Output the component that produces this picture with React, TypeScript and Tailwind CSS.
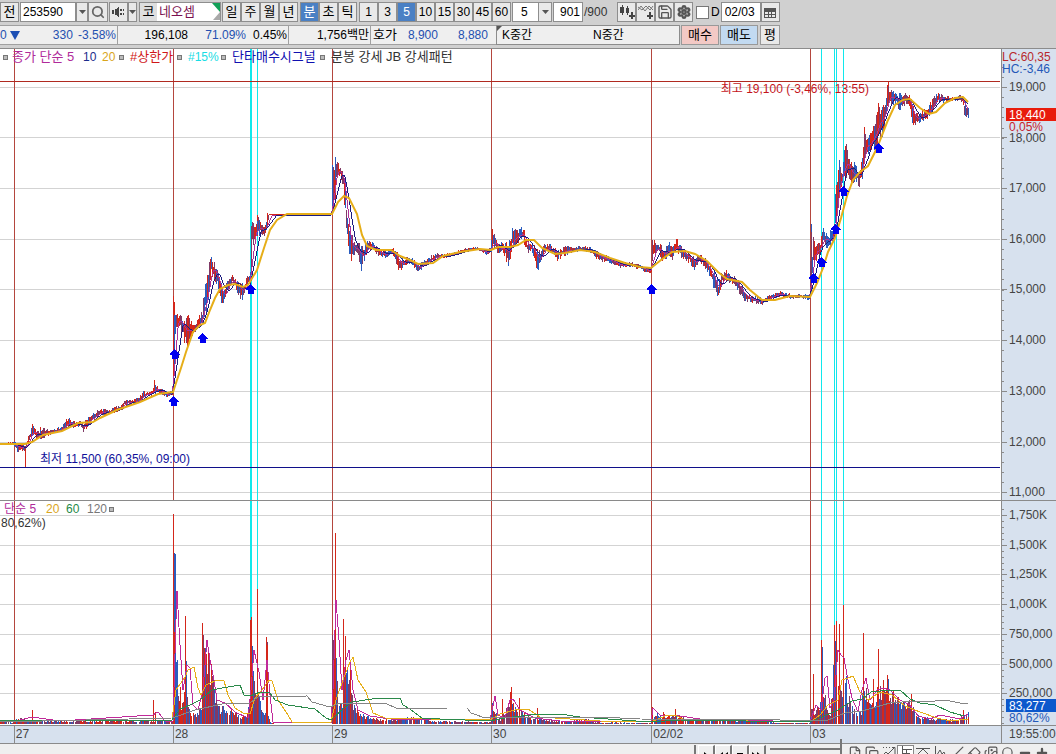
import type { ReactNode } from "react";
import { Search, Save, Settings, FilePlus, Copy, Slash, Eraser, Images, Minus, Plus } from "lucide-react";

type Pt = [number, number];
type Band = [number, number, number];

const RED = "#d4261a";
const BLUE = "#2a5cbf";
const MIX = "#803a66";
const GOLD = "#e6ae18";
const CYAN = "#10e8ec";

// x, top, bottom of the price band
const PRICE: Band[] = [
    [0, 443, 445], [13, 442, 445], [17, 443, 452], [25, 444, 450], [30, 430, 440], [32, 424, 436], [37, 432, 440],
    [43, 428, 438], [50, 430, 435], [62, 426, 431], [68, 417, 426], [75, 422, 428], [80, 421, 426], [83, 424, 433],
    [87, 418, 427], [93, 413, 421], [100, 408, 416], [110, 409, 414], [120, 405, 411], [125, 398, 406], [130, 400, 405],
    [138, 398, 403], [143, 392, 398], [152, 390, 395], [154, 381, 394], [158, 387, 393], [167, 392, 398], [172, 391, 396],
    [173, 300, 393], [175, 303, 342], [178, 313, 326], [182, 318, 332], [184, 320, 344], [186, 313, 348], [190, 322, 338], [195, 324, 333],
    [199, 315, 328], [202, 312, 326], [203, 290, 322], [207, 276, 310], [209, 262, 290], [211, 255, 272], [213, 262, 280],
    [217, 268, 288], [220, 280, 298], [223, 290, 308], [225, 284, 298], [228, 279, 290], [232, 273, 285], [235, 278, 288],
    [238, 281, 296], [242, 283, 299], [245, 281, 292], [248, 273, 284], [250, 272, 284], [251, 225, 276], [252, 222, 245],
    [255, 228, 240], [257, 216, 238], [260, 223, 234], [265, 226, 235], [267, 214, 226], [269, 214, 215], [331, 214, 215],
    [332, 168, 213], [333, 166, 212], [335, 158, 180], [337, 161, 180], [340, 166, 178], [343, 172, 190], [345, 182, 222],
    [346, 205, 232], [348, 220, 247], [351, 230, 266], [353, 240, 256], [357, 241, 256], [361, 248, 270], [363, 246, 262],
    [367, 242, 253], [370, 240, 250], [373, 243, 250], [378, 247, 257], [385, 251, 258], [392, 247, 254], [395, 250, 262],
    [399, 256, 271], [403, 258, 267], [410, 257, 264], [418, 263, 273], [423, 261, 267], [430, 256, 263], [437, 253, 259],
    [445, 254, 258], [453, 252, 256], [467, 248, 251], [477, 247, 250], [486, 250, 255], [490, 248, 252], [492, 230, 250],
    [495, 238, 248], [498, 243, 255], [503, 242, 253], [508, 244, 265], [510, 234, 258], [512, 230, 248], [517, 229, 244],
    [520, 227, 239], [523, 228, 242], [527, 241, 253], [532, 243, 252], [537, 250, 271], [540, 251, 264], [543, 245, 257],
    [547, 243, 252], [553, 247, 254], [557, 250, 260], [565, 246, 255], [575, 247, 252], [585, 246, 251], [592, 248, 255],
    [600, 253, 261], [610, 257, 263], [620, 262, 268], [630, 262, 267], [640, 265, 269], [647, 268, 273], [651, 266, 272],
    [652, 238, 262], [655, 243, 258], [658, 241, 253], [663, 248, 264], [668, 241, 256], [672, 248, 260], [676, 237, 250],
    [678, 242, 254], [685, 251, 261], [690, 253, 263], [694, 257, 271], [698, 255, 262], [703, 256, 265], [708, 262, 273],
    [713, 270, 287], [718, 281, 300], [722, 272, 284], [727, 270, 281], [732, 275, 284], [737, 279, 290], [743, 289, 300],
    [752, 296, 303], [758, 297, 304], [763, 299, 305], [768, 295, 301], [773, 293, 299], [780, 291, 296], [785, 293, 298],
    [792, 294, 299], [800, 294, 298], [809, 295, 300], [811, 224, 290], [812, 253, 280], [813, 236, 268], [815, 244, 262],
    [817, 240, 258], [820, 243, 254], [823, 219, 248], [825, 233, 247], [828, 234, 251], [832, 228, 244], [834, 218, 240],
    [835, 180, 232], [837, 174, 215], [839, 163, 187], [842, 170, 188], [844, 144, 178], [847, 146, 176], [848, 156, 180],
    [852, 166, 186], [855, 163, 180], [859, 172, 187], [862, 152, 177], [864, 127, 160], [867, 137, 156], [872, 128, 150],
    [875, 120, 148], [878, 102, 140], [882, 106, 136], [885, 93, 126], [888, 84, 106], [892, 92, 104], [896, 92, 103],
    [900, 94, 114], [905, 91, 103], [909, 96, 105], [912, 102, 126], [914, 113, 125], [920, 112, 122], [927, 108, 118],
    [932, 99, 111], [937, 93, 102], [943, 96, 102], [952, 97, 101], [960, 95, 100], [963, 97, 106], [964, 101, 117], [968, 106, 119],
];

const PRICE_MA20: Pt[] = [
    [0, 444], [25, 444], [32, 442], [43, 435], [62, 431], [78, 423], [93, 422], [100, 418], [117, 410], [140, 402],
    [158, 394], [173, 392], [177, 380], [181, 368], [186, 352], [193, 332], [200, 325], [205, 323], [210, 310], [215, 298],
    [220, 289], [228, 285], [235, 284], [243, 287], [248, 285], [257, 270], [264, 248], [270, 230], [277, 220], [287, 214],
    [332, 214], [338, 202], [344, 196], [349, 198], [357, 214], [362, 235], [367, 246], [376, 250], [391, 250], [400, 256],
    [410, 260], [418, 264], [433, 263], [443, 256], [460, 252], [480, 249], [491, 250], [498, 247], [510, 247], [518, 245],
    [526, 240], [534, 240], [542, 248], [555, 254], [565, 253], [580, 250], [595, 252], [610, 258], [625, 263], [640, 267],
    [651, 268], [661, 260], [672, 252], [685, 251], [695, 254], [707, 261], [718, 272], [727, 279], [742, 282], [750, 290],
    [762, 300], [775, 300], [790, 296], [810, 297], [817, 283], [823, 268], [828, 252], [835, 238], [841, 218], [847, 196],
    [853, 180], [860, 172], [868, 166], [877, 148], [888, 120], [895, 105], [903, 100], [910, 99], [920, 108], [929, 114],
    [936, 112], [945, 103], [955, 98], [963, 97], [968, 102],
];

// x, bar height
const VOLUME: Pt[] = [
    [0, 3], [12, 2], [16, 6], [30, 4], [60, 3], [150, 4], [172, 4], [173, 100], [177, 60], [180, 20], [182, 25], [186, 42],
    [188, 22], [192, 10], [197, 12], [201, 20], [203, 80], [206, 75], [209, 62], [212, 56], [215, 35], [220, 18], [230, 14],
    [240, 8], [246, 7], [249, 20], [251, 100], [254, 50], [258, 28], [262, 16], [265, 15], [266, 86], [267, 80], [268, 10],
    [270, 2], [275, 0], [331, 0], [332, 90], [336, 65], [339, 32], [342, 24], [345, 60], [350, 54], [353, 22], [358, 14],
    [365, 9], [380, 5], [395, 5], [400, 6], [425, 7], [430, 3], [450, 3], [490, 2], [491, 20], [494, 14], [500, 5],
    [508, 25], [511, 30], [514, 18], [518, 14], [525, 10], [532, 7], [538, 7], [545, 4], [560, 3], [588, 5], [592, 2],
    [650, 1], [651, 15], [654, 10], [665, 9], [675, 10], [685, 6], [700, 4], [720, 5], [760, 3], [780, 1], [809, 1],
    [811, 16], [815, 14], [820, 20], [822, 60], [824, 35], [826, 20], [830, 12], [834, 70], [836, 80], [838, 50], [842, 42],
    [845, 55], [848, 28], [852, 20], [856, 10], [861, 14], [863, 45], [867, 32], [871, 24], [877, 34], [883, 38], [889, 36],
    [893, 28], [900, 24], [905, 22], [910, 24], [915, 14], [920, 7], [930, 6], [945, 5], [955, 4], [960, 7], [968, 12],
];

const VOLUME_SPIKES: [number, number, string][] = [
    [32, 710, RED], [153, 700, RED], [155, 712, RED], [173, 514, RED], [174, 553, BLUE], [175, 554, BLUE], [176, 662, BLUE],
    [185, 616, RED], [186, 661, BLUE], [180, 687, RED], [202, 623, RED], [203, 635, MIX], [205, 648, BLUE], [208, 648, RED], [206, 658, RED],
    [211, 664, RED], [250, 620, RED], [251, 617, RED], [252, 646, BLUE], [253, 672, BLUE], [257, 589, RED], [266, 637, RED],
    [267, 642, MIX], [332, 635, MIX], [333, 640, MIX], [334, 631, RED], [335, 533, RED], [336, 658, BLUE], [343, 619, RED],
    [345, 636, RED], [347, 668, BLUE], [350, 660, RED], [492, 703, BLUE], [502, 699, RED], [510, 692, RED], [511, 687, RED],
    [519, 698, RED], [537, 708, RED], [652, 707, RED], [663, 712, RED], [675, 709, RED], [813, 674, RED], [821, 640, RED],
    [822, 647, BLUE], [834, 625, RED], [835, 641, BLUE], [836, 621, RED], [839, 624, RED], [843, 605, RED], [863, 633, RED],
    [873, 679, RED], [878, 649, RED], [883, 680, RED], [887, 675, RED], [888, 679, BLUE], [893, 690, RED], [911, 694, RED],
    [963, 710, RED], [968, 712, BLUE],
];

const VOLUME_LINES: { color: string; points: Pt[] }[] = [
    {
        color: "#c02a9a",
        points: [
            [0, 721], [20, 720], [32, 717], [60, 721], [153, 715], [158, 712], [165, 721], [173, 721], [176, 620], [177, 591],
            [180, 645], [183, 690], [187, 665], [190, 668], [193, 705], [198, 710], [203, 690], [207, 640], [210, 660],
            [214, 680], [217, 700], [225, 703], [235, 712], [248, 718], [251, 690], [254, 650], [259, 672], [263, 700],
            [267, 660], [270, 695], [273, 722], [331, 723], [333, 690], [336, 600], [339, 640], [342, 690], [346, 660],
            [349, 650], [353, 690], [358, 710], [370, 716], [390, 719], [490, 720], [495, 696], [498, 715], [505, 718],
            [510, 700], [513, 699], [520, 710], [535, 718], [560, 721], [651, 722], [653, 708], [660, 715], [680, 716],
            [700, 719], [810, 722], [816, 705], [821, 710], [825, 678], [827, 676], [830, 708], [834, 700], [838, 650],
            [841, 655], [844, 658], [847, 675], [852, 698], [858, 712], [862, 690], [866, 678], [870, 700], [877, 690],
            [883, 688], [890, 690], [900, 700], [910, 705], [918, 716], [930, 719], [940, 715], [960, 719], [968, 714],
        ],
    },
    {
        color: GOLD,
        points: [
            [0, 721], [172, 720], [176, 690], [185, 677], [188, 670], [194, 667], [198, 688], [201, 695], [206, 685],
            [217, 680], [224, 681], [228, 695], [235, 708], [243, 713], [250, 714], [255, 698], [262, 690], [269, 680],
            [272, 681], [278, 700], [288, 715], [292, 722], [331, 722], [336, 700], [343, 680], [350, 662], [353, 657],
            [358, 680], [366, 692], [373, 713], [385, 718], [430, 719], [490, 720], [500, 714], [515, 710], [528, 709],
            [540, 717], [600, 721], [651, 722], [665, 716], [675, 715], [685, 720], [810, 722], [820, 715], [828, 705],
            [838, 700], [842, 680], [848, 678], [853, 676], [860, 692], [868, 700], [880, 692], [892, 695], [905, 706],
            [920, 712], [937, 718], [950, 721], [968, 719],
        ],
    },
    {
        color: "#2b8a4a",
        points: [
            [0, 720], [172, 720], [180, 709], [190, 705], [200, 700], [212, 690], [222, 688], [240, 685], [244, 695],
            [250, 696], [260, 692], [270, 693], [275, 700], [288, 705], [315, 709], [326, 718], [331, 720], [345, 707],
            [352, 702], [372, 699], [400, 698], [403, 705], [410, 709], [422, 718], [440, 719], [490, 721], [505, 718],
            [538, 714], [560, 714], [580, 717], [650, 722], [680, 720], [810, 722], [838, 710], [852, 701], [862, 699],
            [871, 692], [890, 690], [900, 690], [910, 699], [920, 703], [935, 705], [950, 712], [964, 716],
        ],
    },
    {
        color: "#858585",
        points: [
            [0, 722], [172, 718], [195, 710], [222, 704], [250, 703], [258, 697], [307, 696], [312, 702], [330, 707],
            [340, 703], [385, 703], [398, 709], [448, 708], [467, 708], [471, 713], [485, 718], [510, 717], [600, 717],
            [640, 719], [780, 720], [828, 720], [845, 713], [862, 711], [890, 703], [915, 701], [935, 701], [945, 700],
            [960, 703], [968, 703],
        ],
    },
];

const DAY_LINES = [14, 173, 332, 491, 651, 810];
const SIGNAL_LINES = [250, 251, 257, 821, 834, 836, 843];
const ARROWS: Pt[] = [
    [174, 354], [173, 401], [202, 338], [250, 289], [651, 289], [813, 278], [821, 262], [835, 229], [843, 191], [878, 148],
];
const PRICE_GRID = [87, 137, 188, 239, 289, 340, 391, 442, 492];
const PRICE_LABELS = ["19,000", "18,000", "17,000", "16,000", "15,000", "14,000", "13,000", "12,000", "11,000"];
const VOLUME_GRID = [515, 545, 574, 604, 634, 664, 693];
const VOLUME_LABELS = ["1,750K", "1,500K", "1,250K", "1,000K", "750,000", "500,000", "250,000"];

// Fixed seed so the bars look the same on every render
function makeRandom(seed: number) {
    let s = seed;
    return () => {
        s = (s * 16807) % 2147483647;
        return s / 2147483647;
    };
}

function interpolate(rows: number[][], x: number, col: number) {
    for (let i = 1; i < rows.length; i++) {
        if (x <= rows[i][0]) {
            const a = rows[i - 1];
            const b = rows[i];
            return a[col] + ((b[col] - a[col]) * (x - a[0])) / (b[0] - a[0]);
        }
    }
    return rows[rows.length - 1][col];
}

function toPath(points: number[][]) {
    return "M" + points.map((p) => `${p[0]} ${p[1]}`).join("L");
}

function buildCandles() {
    const rand = makeRandom(4211);
    const paths: Record<string, string> = { [RED]: "", [BLUE]: "", [MIX]: "" };
    const mids: number[] = [];
    for (let x = 0; x <= 968; x++) {
        const top = interpolate(PRICE, x, 1);
        const bottom = interpolate(PRICE, x, 2);
        const span = bottom - top;
        const y1 = Math.round(top + (rand() * 0.75 - 0.15) * span * 0.6);
        const y2 = Math.max(y1 + 1, Math.round(bottom - (rand() * 0.75 - 0.15) * span * 0.6));
        const r = rand();
        const color = span < 1.5 ? RED : r < 0.36 ? RED : r < 0.66 ? BLUE : MIX;
        paths[color] += `M${x + 0.5} ${y1}V${y2}`;
        mids.push((top + bottom) / 2);
    }
    // long wicks at the opens and at the extremes
    paths[RED] += "M25.5 446V467M888.5 82V100M40.5 427V436M154.5 380V392M173.5 304V390M174.5 302V342M257.5 215V236M335.5 158V200M864.5 127V160M878.5 103V135";
    paths[BLUE] += "M332.5 168V212M811.5 224V292M839.5 160V190M508.5 248V266M537.5 252V269";
    return { paths, mids };
}

function average(mids: number[], n: number) {
    const out: Pt[] = [];
    for (let x = 0; x < mids.length; x++) {
        const part = mids.slice(Math.max(0, x - n + 1), x + 1);
        out.push([x, Math.round(part.reduce((a, b) => a + b, 0) / part.length)]);
    }
    return out;
}

function buildVolume() {
    const rand = makeRandom(977);
    const paths: Record<string, string> = { [MIX]: "", [BLUE]: "", [RED]: "" };
    for (let x = 0; x <= 968; x++) {
        const h = interpolate(VOLUME, x, 1);
        const r = rand();
        const v = Math.round(h * (0.55 + rand() * 0.55));
        if (v < 1 || rand() < 0.1) continue;
        const color = r < 0.26 ? RED : r < 0.54 ? BLUE : MIX;
        paths[color] += `M${x + 0.5} 724V${724 - v}`;
    }
    VOLUME_SPIKES.forEach(([x, y, color]) => {
        paths[color] += `M${x + 0.5} 724V${y}`;
    });
    return paths;
}

const candles = buildCandles();
const volume = buildVolume();
const ma5 = average(candles.mids, 6);
const ma10 = average(candles.mids, 11);

export default function App() {
    return (
        <div className="flex h-screen flex-col overflow-hidden bg-[#d0d0d0] font-['Liberation_Sans','Noto_Sans_CJK_KR',sans-serif] text-[13px] leading-4 text-black">
            <Toolbar />
            <QuoteBar />
            <main className="mt-[3px] flex shrink-0 border-t border-[#8c8c8c] bg-white">
                <div className="min-w-0 flex-1">
                    <PricePanel />
                    <VolumePanel />
                    <DateAxis />
                </div>
                <ValueAxis />
            </main>
            <BottomBar />
        </div>
    );
}

function ToolButton({ children, active, label, className = "w-[19px]" }: { children: ReactNode; active?: boolean; label?: string; className?: string }) {
    return (
        <button
            type="button"
            aria-label={label}
            className={`flex h-5 shrink-0 items-center justify-center border border-[#8e8e8e] ${active ? "bg-[#4a80c4] text-white" : "bg-[#e9e9e9]"} ${className}`}
        >
            {children}
        </button>
    );
}

function DownArrow() {
    return (
        <svg width="7" height="4" viewBox="0 0 7 4" aria-hidden="true">
            <path d="M0 0H7L3.5 4Z" fill="#555" />
        </svg>
    );
}

function Toolbar() {
    return (
        <header className="flex h-6 shrink-0 items-center">
            <ToolButton>전</ToolButton>
            <input aria-label="종목코드" defaultValue="253590" className="ml-px h-5 w-14 border border-[#8e8e8e] bg-white px-[2px] text-xs" />
            <ToolButton label="종목 목록" className="w-3"><DownArrow /></ToolButton>
            <ToolButton label="검색" className="w-5"><Search className="h-[14px] w-[14px] text-[#666]" strokeWidth={3} /></ToolButton>
            <ToolButton label="소리" className="ml-px w-[19px]">
                <svg width="14" height="12" viewBox="0 0 14 12" fill="#444" shapeRendering="crispEdges" aria-hidden="true">
                    <path d="M0 4H2V8H0ZM3 3H4L7 0V12L4 9H3ZM8 3H10V5H8ZM8 7H10V9H8ZM11 3H12V5H11ZM11 7H12V9H11Z" />
                </svg>
            </ToolButton>
            <ToolButton label="소리 설정" className="w-[9px]"><DownArrow /></ToolButton>
            <div className="ml-[2px] flex h-5 w-[82px] items-center border border-[#8e8e8e] bg-white">
                <span className="flex h-full w-[17px] items-center justify-center bg-[#dedede]">코</span>
                <span className="ml-[2px] flex-1 text-[#7a1150]">네오셈</span>
                <svg width="8" height="18" viewBox="0 0 8 18" aria-hidden="true">
                    <path d="M0 0H8V9Z" fill="#12a058" />
                    <path d="M8 9V17H1Z" fill="#a9a9a9" />
                </svg>
            </div>
            <div className="ml-px flex">
                {["일", "주", "월", "년"].map((t) => <ToolButton key={t}>{t}</ToolButton>)}
            </div>
            <div className="ml-[2px] flex">
                {["분", "초", "틱"].map((t) => <ToolButton key={t} active={t === "분"}>{t}</ToolButton>)}
            </div>
            <div className="ml-[2px] flex text-xs">
                {["1", "3", "5", "10", "15", "30", "45", "60"].map((t) => <ToolButton key={t} active={t === "5"}>{t}</ToolButton>)}
            </div>
            <div className="relative ml-px h-5 w-10 text-xs">
                <select aria-label="분 간격" defaultValue="5" className="h-5 w-full appearance-none border border-[#8e8e8e] bg-white pl-2">
                    <option>5</option>
                    <option>10</option>
                </select>
                <span className="pointer-events-none absolute inset-y-0 right-0 flex w-[14px] items-center justify-center border border-[#8e8e8e] bg-[#e9e9e9]">
                    <DownArrow />
                </span>
            </div>
            <input aria-label="조회 개수" defaultValue="901" className="ml-px h-5 w-[30px] border border-[#8e8e8e] bg-white pr-[2px] text-right text-xs" />
            <span className="w-[34px] pl-px text-xs text-[#333]">/900</span>
            <ToolButton label="봉 추가">
                <svg width="16" height="14" viewBox="0 0 16 14" fill="#444" shapeRendering="crispEdges" aria-hidden="true">
                    <path d="M1 2H5V8H1ZM3 0H4V10H3ZM7 3H10V8H7ZM8 1H9V10H8ZM12 7H14V14H12ZM10 10H16V12H10Z" />
                </svg>
            </ToolButton>
            <ToolButton label="지표 추가">
                <svg width="16" height="14" viewBox="0 0 16 14" fill="none" aria-hidden="true">
                    <path d="M0 5L3 1L7 6L11 1L15 5M0 2L4 5L8 1L12 5L15 1" stroke="#777" />
                    <path d="M11 7H13V14H11ZM9 10H15V12H9Z" fill="#444" />
                </svg>
            </ToolButton>
            <ToolButton label="저장"><Save className="h-4 w-4 text-[#555]" /></ToolButton>
            <ToolButton label="설정"><Settings className="h-[14px] w-[14px] text-[#555]" strokeWidth={4} /></ToolButton>
            <label className="ml-[3px] flex items-center gap-[2px] text-xs">
                <input type="checkbox" className="h-[13px] w-[13px] appearance-none border border-[#777] bg-white" />
                D
            </label>
            <input aria-label="날짜" defaultValue="02/03" className="ml-px h-5 w-10 border border-[#8e8e8e] bg-white px-[3px] text-xs" />
            <ToolButton label="달력">
                <svg width="12" height="11" viewBox="0 0 12 11" fill="none" stroke="#555" shapeRendering="crispEdges" aria-hidden="true">
                    <path d="M.5 1.5H11.5V10.5H.5ZM.5 4.5H11.5M.5 7.5H11.5M4.5 4V10M7.5 4V10" />
                    <path d="M0 2.5H12" strokeWidth="2" />
                </svg>
            </ToolButton>
        </header>
    );
}

function QuoteBar() {
    return (
        <section aria-label="시세" className="flex h-[21px] shrink-0 items-center pt-px text-xs">
            <div className="flex h-5 w-[118px] items-center justify-between border-y border-r border-[#a0a0a0] bg-[#efefef] pr-px text-[#2450b0]">
                <span className="flex items-center gap-[3px]">
                    0
                    <svg width="10" height="9" viewBox="0 0 10 9" aria-hidden="true"><path d="M0 0H10L5 9Z" fill="#1c4fb4" /></svg>
                </span>
                <span className="w-12 text-right">330</span>
                <span>-3.58%</span>
            </div>
            <div className="flex h-5 w-[171px] items-center justify-end border-y border-r border-[#a0a0a0] bg-[#efefef] pr-px">
                <span>196,108</span>
                <span className="w-[58px] text-right text-[#2450b0]">71.09%</span>
                <span className="w-[41px] text-right">0.45%</span>
            </div>
            <div className="flex h-5 w-[82px] items-center justify-end border-y border-r border-[#a0a0a0] bg-[#efefef] pr-px">1,756백만</div>
            <div className="flex h-5 w-[125px] items-center border-y border-[#a0a0a0] bg-[#efefef] pl-[2px]">
                <span className="text-[13px]">호가</span>
                <span className="w-[41px] text-right text-[#2450b0]">8,900</span>
                <span className="w-[50px] text-right text-[#2450b0]">8,880</span>
            </div>
            <div className="relative flex h-5 w-[184px] items-center border border-[#8c8c8c] bg-[#efefef] pl-[5px]">
                <svg className="absolute left-0 top-0" width="5" height="5" viewBox="0 0 5 5" aria-hidden="true"><path d="M0 0H5L0 5Z" fill="#555" /></svg>
                <span className="w-[91px]">K중간</span>
                <span>N중간</span>
            </div>
            <button type="button" className="ml-px h-5 w-[38px] border border-[#999] bg-[#f3c9c5] text-[13px]">매수</button>
            <button type="button" className="ml-px h-5 w-[38px] border border-[#999] bg-[#c2daf1] text-[13px]">매도</button>
            <button type="button" className="ml-[2px] h-5 w-5 border border-[#999] bg-[#e9e9e9] text-[13px]">평</button>
        </section>
    );
}

function Bullet() {
    return <span className="h-[5px] w-[5px] border border-[#777] bg-[#bbb]" />;
}

function PricePanel() {
    return (
        <div className="relative h-[451px]">
            <svg className="h-full w-full" viewBox="0 49 1001 451" preserveAspectRatio="none" shapeRendering="crispEdges" fill="none" role="img" aria-label="가격 차트">
                {PRICE_GRID.map((y) => <path key={y} d={`M0 ${y + 0.5}H1000`} stroke="#d3d3d3" />)}
                {DAY_LINES.map((x) => <path key={x} d={`M${x + 0.5} 49V500`} stroke="#b4463e" />)}
                {SIGNAL_LINES.map((x) => <path key={x} d={`M${x + 0.5} 49V500`} stroke={CYAN} />)}
                <path d="M0 81.5H1000" stroke="#b02a20" />
                <path d="M0 467.5H1000" stroke="#10108a" />
                {Object.entries(candles.paths).map(([color, d]) => <path key={color} d={d} stroke={color} />)}
                <path d={toPath(ma5)} stroke="#b0309a" />
                <path d={toPath(ma10)} stroke="#1c1c80" />
                <path d={toPath(PRICE_MA20)} stroke={GOLD} strokeWidth="2" shapeRendering="auto" />
                {ARROWS.map(([x, y]) => (
                    <path key={y} transform={`translate(${x} ${y})`} d="M.5-5L5.5 0V1H3.5V5H-2.5V1H-4.5V0Z" fill="#0000f0" />
                ))}
            </svg>
            <div className="absolute left-[3px] top-0 flex items-center whitespace-nowrap">
                <Bullet />
                <span className="ml-1 w-[71px] text-[#b02a9a]">종가 단순 5</span>
                <span className="w-[19px] text-xs text-[#1c2c8c]">10</span>
                <span className="w-[17px] text-xs text-[#d9a51c]">20</span>
                <Bullet />
                <span className="ml-[6px] w-[47px] text-[#d01818]">#상한가</span>
                <Bullet />
                <span className="ml-[6px] w-[33px] text-xs text-[#18dce4]">#15%</span>
                <Bullet />
                <span className="ml-[6px] w-[88px] text-[#1010b0]">단타매수시그널</span>
                <Bullet />
                <span className="ml-[6px] text-[#333]">분봉 강세 JB 강세패턴</span>
            </div>
            <span className="absolute left-[72%] top-8 whitespace-nowrap text-xs text-[#c4141c]">최고 19,100 (-3,46%, 13:55)</span>
            <span className="absolute left-[4%] top-[402px] whitespace-nowrap text-xs text-[#10109a]">최저 11,500 (60,35%, 09:00)</span>
        </div>
    );
}

function VolumePanel() {
    return (
        <div className="relative h-[226px] border-y border-[#8a8a8a]">
            <svg className="h-full w-full" viewBox="0 501 1001 224" preserveAspectRatio="none" shapeRendering="crispEdges" fill="none" role="img" aria-label="거래량 차트">
                {VOLUME_GRID.map((y) => <path key={y} d={`M0 ${y + 0.5}H1000`} stroke="#d3d3d3" />)}
                {DAY_LINES.map((x) => <path key={x} d={`M${x + 0.5} ${x === 173 ? 514 : 501}V724`} stroke="#b4463e" />)}
                {SIGNAL_LINES.map((x) => <path key={x} d={`M${x + 0.5} 501V724`} stroke={CYAN} />)}
                {Object.entries(volume).map(([color, d]) => <path key={color} d={d} stroke={color} />)}
                {VOLUME_LINES.map((l) => <path key={l.color} d={toPath(l.points)} stroke={l.color} />)}
            </svg>
            <div className="absolute left-1 top-0 flex items-center text-xs">
                <span className="w-[42px] text-[#b02a9a]">단순 5</span>
                <span className="w-5 text-[#d9a51c]">20</span>
                <span className="w-[21px] text-[#1f8a48]">60</span>
                <span className="w-[22px] text-[#777]">120</span>
                <Bullet />
            </div>
            <span className="absolute left-px top-[14px] text-xs text-[#333]">80,62%)</span>
        </div>
    );
}

// Each day takes a share of the width equal to its number of bars
function DateAxis() {
    return (
        <div className="flex h-[18px] border-b border-[#8a8a8a] bg-[#d7e1ee] text-xs text-[#444]">
            <span className="flex-[14]" />
            <span className="flex-[159] border-l border-[#8a8a8a] pl-px">27</span>
            <span className="flex-[159] border-l border-[#8a8a8a] pl-px">28</span>
            <span className="flex-[159] border-l border-[#8a8a8a] pl-px">29</span>
            <span className="flex-[160] border-l border-[#8a8a8a] pl-px">30</span>
            <span className="flex-[159] border-l border-[#8a8a8a] pl-px">02/02</span>
            <span className="flex-[191] border-l border-[#8a8a8a] pl-px">03</span>
        </div>
    );
}

function ValueAxis() {
    const minor: number[] = [];
    for (let i = -2; i < 41; i++) minor.push(Math.round(87 + i * 10.13));
    for (let i = 0; i < 37; i++) minor.push(Math.round(509 + i * 5.95));

    return (
        <div className="w-[55px] shrink-0 border-b border-l border-[#8a8a8a] bg-[#d7e1ee]">
            <svg className="block" width="54" height="694" viewBox="1002 49 54 694" shapeRendering="crispEdges" fontSize="12" fill="#444" role="img" aria-label="값 축">
                {minor.map((y) => <path key={y} d={`M1002 ${y + 0.5}h2`} stroke="#8a8a8a" />)}
                {[...PRICE_GRID, ...VOLUME_GRID].map((y) => <path key={y} d={`M1002 ${y + 0.5}h5`} stroke="#8a8a8a" />)}
                {PRICE_GRID.map((y, i) => <text key={y} x="1009" y={i === 1 ? y + 5 : y + 4}>{PRICE_LABELS[i]}</text>)}
                {VOLUME_GRID.map((y, i) => <text key={y} x="1009" y={y + 4}>{VOLUME_LABELS[i]}</text>)}
                <text x="1002" y="61" fill="#b8282c">LC:60,35</text>
                <text x="1002" y="73" fill="#2458b8">HC:-3,46</text>
                <rect x="1006" y="108" width="50" height="13" fill="#e81c0c" />
                <rect x="1008" y="121" width="48" height="12" fill="#d7e1ee" />
                <text x="1009" y="119" fill="#fff">18,440</text>
                <text x="1009" y="131" fill="#c8242c">0,05%</text>
                <rect x="1006" y="699" width="50" height="13" fill="#0c58cc" />
                <text x="1009" y="710" fill="#fff">83,277</text>
                <text x="1009" y="722" fill="#2458b8">80,62%</text>
                <path d="M1002 500.5h54M1002 725.5h54" stroke="#8a8a8a" />
                <text x="1009" y="738">19:55:00</text>
            </svg>
        </div>
    );
}

function LineIcon({ d, className }: { d: string; className?: string }) {
    return (
        <svg viewBox="0 0 14 14" fill="none" stroke="currentColor" className={className} aria-hidden="true">
            <path d={d} />
        </svg>
    );
}

function BottomBar() {
    const tools: { label: string; icon: ReactNode; active?: boolean }[] = [
        { label: "새 차트", icon: <FilePlus className="h-[14px] w-[14px] shrink-0" /> },
        { label: "복사", icon: <Copy className="h-[14px] w-[14px] shrink-0" /> },
        { label: "추세선", icon: <LineIcon className="h-[14px] w-[14px] shrink-0" d="M1 1.5H2M4 1.5H5M7 1.5H8M10 1.5H13V13M1 9L4 6L6 8L12 2M1 12.5H13" /> },
        { label: "십자선", icon: <LineIcon className="h-[14px] w-[14px] shrink-0" d="M3.5 0V13M3 3.5H13M7.5 3V10M3 7.5H11" />, active: true },
        { label: "기준선", icon: <LineIcon className="h-[14px] w-[14px] shrink-0" d="M0 2.5H14M2 8L7 3L12 8" /> },
        { label: "막대", icon: <LineIcon className="h-[14px] w-[14px] shrink-0" d="M2.5 0V13M2 12L7 4L9 8L11 6L13 11" /> },
        { label: "사선", icon: <Slash className="h-[14px] w-[14px] shrink-0" /> },
        { label: "지우기", icon: <Eraser className="h-[14px] w-[14px] shrink-0" /> },
        { label: "이미지", icon: <Images className="h-[14px] w-[14px] shrink-0" /> },
        { label: "돋보기", icon: <Search className="h-[14px] w-[14px] shrink-0" /> },
        { label: "축소", icon: <Minus className="h-[14px] w-[14px] shrink-0" strokeWidth={4} /> },
        { label: "확대", icon: <Plus className="h-[14px] w-[14px] shrink-0" strokeWidth={4} /> },
    ];
    const players = [
        { label: "재생", d: "M5 3L10 7L5 11Z" },
        { label: "뒤로", d: "M7 3V11L2 7ZM12 3V11L7 7Z" },
        { label: "정지", d: "M4 4H10V10H4Z" },
        { label: "앞으로", d: "M2 3V11L7 7ZM7 3V11L12 7Z" },
    ];
    return (
        <footer className="flex h-6 shrink-0 items-start bg-[#efefef] pt-px">
            <div className="h-5 flex-1 border-r-2 border-[#777]" />
            <div className="ml-[2px] flex">
                {players.map((p) => (
                    <button key={p.label} type="button" aria-label={p.label} className="h-5 w-[17px] border-r-2 border-l border-t border-[#777] border-l-white border-t-white">
                        <svg width="14" height="14" viewBox="0 0 14 14" aria-hidden="true"><path d={p.d} fill="#000" /></svg>
                    </button>
                ))}
            </div>
            <input
                type="range"
                aria-label="재생 속도"
                defaultValue="100"
                className="ml-1 mt-[3px] h-[2px] w-[72px] appearance-none bg-[#777] [&::-webkit-slider-thumb]:h-5 [&::-webkit-slider-thumb]:w-[2px] [&::-webkit-slider-thumb]:appearance-none [&::-webkit-slider-thumb]:bg-[#777]"
            />
            <div className="ml-1 flex pr-[6px]">
                {tools.map((t) => (
                    <button
                        key={t.label}
                        type="button"
                        aria-label={t.label}
                        className={`flex h-5 w-[17px] justify-center text-[#555] ${t.active ? "border border-[#888] bg-white" : "pt-px"}`}
                    >
                        {t.icon}
                    </button>
                ))}
            </div>
        </footer>
    );
}
